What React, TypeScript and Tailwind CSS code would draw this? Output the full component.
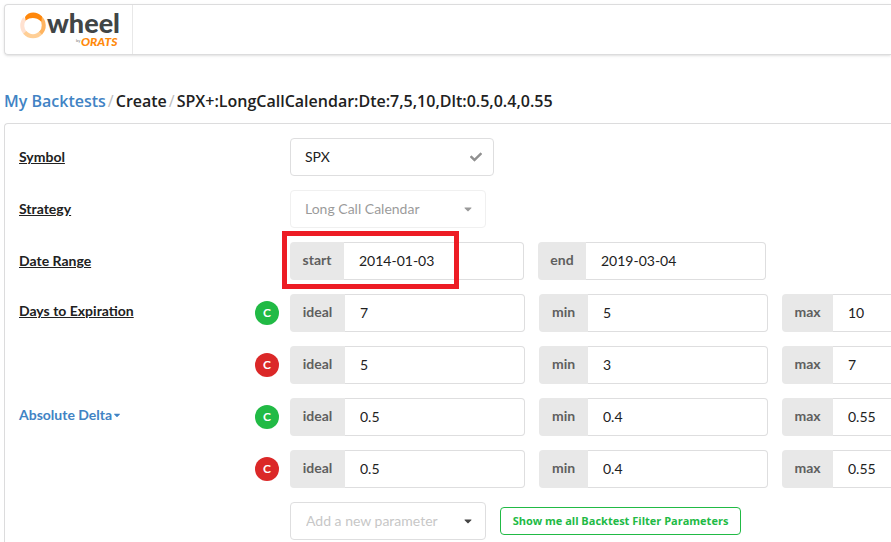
import React from 'react'
import { FaCheck, FaCaretDown } from 'react-icons/fa'

const Logo: React.FC = () => (
  <svg width="104" height="42" viewBox="0 0 104 42" className="overflow-visible" role="img" aria-label="wheel by ORATS">
    <g fill="none" strokeWidth="4">
      <path d="M5.4 24.1A10.7 10.7 0 0 1 4.8 9.6" stroke="#ffe1d0" />
      <path d="M21.2 23.4A10.7 10.7 0 0 1 4.8 23.4" stroke="#ffcf96" />
      <path d="M19.9 8.3A10.7 10.7 0 0 1 20.6 24.1" stroke="#ffb45f" />
    </g>
    <path d="M5 8C8.5 2.4 17 2 22 7.6L21.4 12.4C16 8 10.5 8 5.6 11.4Z" fill="#ff870a" />
    <text x="27" y="24" fontSize="27" fontWeight="900" fill="#414546" fontFamily="Lato, sans-serif">wheel</text>
    <text x="56" y="33" fontSize="4" fill="#777" fontFamily="Lato, sans-serif">by</text>
    <text x="61" y="37" fontSize="12" fontWeight="900" fontStyle="italic" fill="#ff8a0c" fontFamily="Lato, sans-serif">ORATS</text>
  </svg>
)

const Leg: React.FC<{ color: 'green' | 'red' }> = ({ color }) => (
  <span
    className={`flex size-6 shrink-0 items-center justify-center rounded-full text-xs font-bold text-white ${
      color === 'green' ? 'bg-[#21ba45]' : 'bg-[#db2828]'
    }`}
  >
    C
  </span>
)

type FieldProps = { id: string; label: string; value: string; className: string; labelClass: string }

const Field: React.FC<FieldProps> = ({ id, label, value, className, labelClass }) => (
  <div className={`flex h-[38px] shrink-0 ${className}`}>
    <label
      htmlFor={id}
      className={`flex shrink-0 items-center justify-center rounded-l bg-[#e8e8e8] pb-0.5 font-bold text-[#5f5f5f] ${labelClass}`}
    >
      {label}
    </label>
    <input
      id={id}
      defaultValue={value}
      className="w-full min-w-0 rounded-r border border-l-0 border-[#dededf] bg-white px-[15px] text-[#212121] outline-none focus:border-[#85b7d9]"
    />
  </div>
)

type RowProps = { label?: React.ReactNode; leg?: 'green' | 'red'; children: React.ReactNode }

const Row: React.FC<RowProps> = ({ label, leg, children }) => (
  <div className="flex min-h-[38px] items-center">
    <div className={`w-[236px] shrink-0 font-bold ${leg ? 'pb-1' : ''}`}>{label}</div>
    <div className="w-[35px] shrink-0">{leg && <Leg color={leg} />}</div>
    <div className="flex items-center gap-3.5">{children}</div>
  </div>
)

type RangeProps = { id: string; values: [string, string, string] }

const RangeFields: React.FC<RangeProps> = ({ id, values }) => (
  <>
    <Field id={`${id}-ideal`} label="ideal" value={values[0]} className="w-[235px]" labelClass="w-[55px]" />
    <Field id={`${id}-min`} label="min" value={values[1]} className="w-[229px]" labelClass="w-[49px]" />
    <Field id={`${id}-max`} label="max" value={values[2]} className="w-[229px]" labelClass="w-[51px]" />
  </>
)

const App: React.FC = () => {
  return (
    <div
      className="flex min-h-screen flex-col overflow-x-hidden bg-white pl-1 pt-1 text-sm text-[#212121]"
      style={{ fontFamily: 'Lato, sans-serif' }}
    >
      {/* Top menu */}
      <header className="flex h-[51px] rounded-l border border-r-0 border-[#dcdcdd] shadow-sm">
        <a href="#" className="flex w-32 items-start border-r border-[#e8e8e8] pl-[15px] pt-1">
          <Logo />
        </a>
      </header>

      {/* Breadcrumb */}
      <nav
        className="mt-[34px] flex h-6 items-center whitespace-nowrap text-base font-semibold"
        style={{ fontFamily: '"Open Sans", sans-serif' }}
      >
        <a href="#" className="text-[#4183c4]">My Backtests</a>
        <span className="px-0.5 font-normal text-[#bcbcbc]">/</span>
        <span>Create</span>
        <span className="px-0.5 font-normal text-[#bcbcbc]">/</span>
        <span>SPX+:LongCallCalendar:Dte:7,5,10,Dlt:0.5,0.4,0.55</span>
      </nav>

      {/* Backtest form */}
      <form className="mt-2.5 flex flex-1 flex-col gap-3.5 overflow-hidden rounded-tl border-l border-t border-[#dcdcdd] pl-3.5 pt-3.5">
        <Row label={<label htmlFor="symbol" className="underline">Symbol</label>}>
          <div className="relative w-51">
            <input
              id="symbol"
              defaultValue="SPX"
              className="h-[38px] w-full rounded border border-[#dededf] px-3.5 pb-0.5 outline-none"
            />
            <FaCheck className="absolute right-3 top-[13px] size-3 text-[#909090]" />
          </div>
        </Row>

        <Row label={<label htmlFor="strategy" className="underline">Strategy</label>}>
          <div className="relative w-49 opacity-45">
            <select
              id="strategy"
              disabled
              className="h-[38px] w-full appearance-none rounded border border-[#dededf] px-3.5"
            >
              <option>Long Call Calendar</option>
            </select>
            <FaCaretDown className="pointer-events-none absolute right-3 top-[13px] size-3" />
          </div>
        </Row>

        <Row label={<span className="underline">Date Range</span>}>
          <div className="relative">
            <Field id="start" label="start" value="2014-01-03" className="w-[234px]" labelClass="w-[54px]" />
            {/* Highlight around the start date */}
            <div className="pointer-events-none absolute -left-2 -top-[11px] h-[58px] w-[177px] border-5 border-[#ed1c24]" />
          </div>
          <Field id="end" label="end" value="2019-03-04" className="w-[228px]" labelClass="w-12" />
        </Row>

        <Row label={<span className="underline">Days to Expiration</span>} leg="green">
          <RangeFields id="dte-1" values={['7', '5', '10']} />
        </Row>
        <Row leg="red">
          <RangeFields id="dte-2" values={['5', '3', '7']} />
        </Row>

        <Row
          leg="green"
          label={
            <button type="button" className="flex items-center font-bold text-[#4183c4]">
              Absolute Delta
              <FaCaretDown className="size-2.5" />
            </button>
          }
        >
          <RangeFields id="delta-1" values={['0.5', '0.4', '0.55']} />
        </Row>
        <Row leg="red">
          <RangeFields id="delta-2" values={['0.5', '0.4', '0.55']} />
        </Row>

        <Row>
          <div className="relative w-49">
            <select
              aria-label="Add a new parameter"
              className="h-[38px] w-full appearance-none rounded border border-[#dededf] px-[15px] text-[#c7c7c7]"
            >
              <option>Add a new parameter</option>
            </select>
            <FaCaretDown className="pointer-events-none absolute right-3 top-[13px] size-3 text-[#444]" />
          </div>
          <button
            type="button"
            className="h-7 w-[241px] whitespace-nowrap rounded border border-[#21ba45] text-[11px] font-bold text-[#21ba45]"
            style={{ fontFamily: '"Open Sans", sans-serif' }}
          >
            Show me all Backtest Filter Parameters
          </button>
        </Row>
      </form>
    </div>
  )
}

export default App
